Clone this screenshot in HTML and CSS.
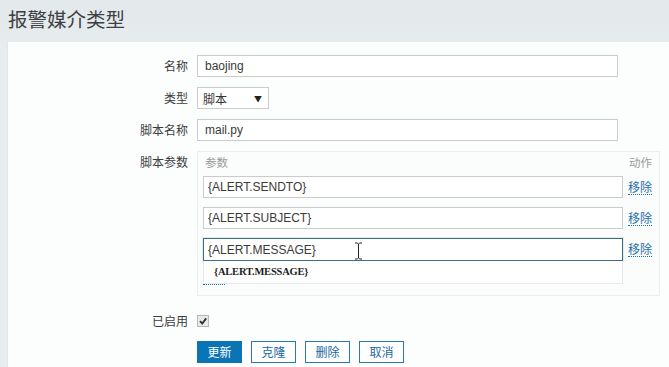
FILE: index.html
```html
<!DOCTYPE html>
<html lang="zh">
<head>
<meta charset="utf-8">
<title>报警媒介类型</title>
<link rel="stylesheet" href="styles.css">
</head>
<body>
<header class="page-header"><h1 class="page-title">报警媒介类型</h1></header>
<main class="card">
  <form class="form">
    <div class="row">
      <label class="label">名称</label>
      <div class="field"><input class="text wide" type="text" value="baojing"></div>
    </div>
    <div class="row">
      <label class="label">类型</label>
      <div class="field">
        <div class="select"><span>脚本</span><span class="caret">▼</span></div>
      </div>
    </div>
    <div class="row">
      <label class="label">脚本名称</label>
      <div class="field"><input class="text wide" type="text" value="mail.py"></div>
    </div>
    <div class="row">
      <label class="label">脚本参数</label>
      <div class="field">
        <div class="params">
          <div class="params-head">
            <span>参数</span><span>动作</span>
          </div>
          <div class="param-row">
            <input class="text param" type="text" value="{ALERT.SENDTO}">
            <a class="link">移除</a>
          </div>
          <div class="param-row">
            <input class="text param" type="text" value="{ALERT.SUBJECT}">
            <a class="link">移除</a>
          </div>
          <div class="param-row">
            <div class="input-wrap">
              <input class="text param focused" type="text" value="{ALERT.MESSAGE}">
              <div class="suggest">{ALERT.MESSAGE}</div>
              <svg class="ibeam" width="9" height="18" viewBox="0 0 9 18"><path d="M1 1h2.5M5.5 1H8M4.5 1.5v15M1 17h2.5M5.5 17H8M3.5 1.5L4.5 2.5L5.5 1.5M3.5 16.5L4.5 15.5L5.5 16.5" stroke="#222" stroke-width="1" fill="none"/></svg>
            </div>
            <a class="link">移除</a>
          </div>
          <div class="add-row"><span class="add-link"></span></div>
        </div>
      </div>
    </div>
    <div class="row enabled">
      <label class="label">已启用</label>
      <div class="field">
        <span class="checkbox"><svg width="10" height="10" viewBox="0 0 10 10"><path d="M2 5.2L4.2 7.5L8.2 2.3" stroke="#333" stroke-width="1.9" fill="none"/></svg></span>
      </div>
    </div>
    <div class="row buttons">
      <div class="label"></div>
      <div class="field btns">
        <button type="button" class="btn primary">更新</button>
        <button type="button" class="btn">克隆</button>
        <button type="button" class="btn">删除</button>
        <button type="button" class="btn">取消</button>
      </div>
    </div>
  </form>
</main>
</body>
</html>
```
FILE: styles.css
```css
* { box-sizing: border-box; }
html, body { margin: 0; padding: 0; }
body {
  background: #e7ecee;
  font-family: "Liberation Sans", "Noto Sans CJK SC", sans-serif;
  font-size: 12px;
  color: #2b2b2b;
  width: 669px;
  height: 367px;
  overflow: hidden;
}
.page-header {
  height: 42px;
  padding-left: 8px;
  background: linear-gradient(#e3e9eb, #e6ecee);
}
.page-title {
  margin: 0;
  font-size: 19.5px;
  font-weight: normal;
  line-height: 38px;
  color: #3d4043;
  font-family: "Noto Sans CJK SC", sans-serif;
}
.card {
  margin-left: 7px;
  background: #fcfdfd;
  height: 325px;
  padding-top: 13px;
  border-left: 1px solid #e2e6e8;
}
.form { display: flex; flex-direction: column; gap: 10px; }
.row { display: flex; gap: 9px; align-items: flex-start; }
.label {
  width: 180px;
  flex: none;
  text-align: right;
  line-height: 22px;
  font-size: 12px;
  color: #3a3c3e;
  font-family: "Noto Sans CJK SC", sans-serif;
}
.field { flex: none; }
.text {
  display: block;
  height: 22px;
  border: 1px solid #cbcbcb;
  background: #fff;
  padding: 0 7px;
  font-family: "Liberation Sans", "Noto Sans CJK SC", sans-serif;
  font-size: 12px;
  color: #3a3a3a;
  outline: none;
  margin: 0;
}
.wide { width: 421px; }
.select {
  width: 72px;
  height: 22px;
  border: 1px solid #cbcbcb;
  background: #fff;
  display: flex;
  align-items: center;
  justify-content: space-between;
  padding: 0 6px 0 5px;
  font-family: "Noto Sans CJK SC", sans-serif;
  color: #333;
}
.caret { font-size: 8px; color: #222; }
.params {
  width: 463px;
  height: 145px;
  border: 1px solid #eceff0;
  background: #fbfcfc;
  padding: 0 7px 0 5px;
}
.params-head {
  display: flex;
  justify-content: space-between;
  height: 24px;
  line-height: 20px;
  padding-left: 2px;
  color: #9a9a9a;
  font-family: "Noto Sans CJK SC", sans-serif;
  font-size: 11.5px;
}
.param-row {
  display: flex;
  align-items: center;
  gap: 5px;
  height: 22px;
  margin-bottom: 9px;
}
.param { width: 420px; padding: 0 4px; }
.input-wrap { position: relative; width: 420px; height: 22px; }
.focused { border-color: #3f6e7f; height: 23px; box-shadow: 0 0 0 1px rgba(140,190,205,0.25); }
.suggest {
  position: absolute;
  left: 0;
  top: 23px;
  width: 420px;
  height: 23px;
  background: #fff;
  border: 1px solid #e6e9ea;
  border-top: none;
  padding-left: 10px;
  line-height: 22px;
  font-family: "Liberation Serif", "DejaVu Serif", serif;
  font-weight: bold;
  font-size: 10.5px;
  letter-spacing: -0.2px;
  color: #1c1c1c;
  z-index: 2;
}
.ibeam { position: absolute; left: 151px; top: 4px; z-index: 3; }
.link {
  color: #1f6ea8;
  text-decoration: none;
  border-bottom: 1px dotted #1f6ea8;
  font-family: "Noto Sans CJK SC", sans-serif;
  font-size: 12px;
  line-height: 15px;
  cursor: pointer;
}
.add-row { height: 20px; padding-top: 15px; }
.add-link { display: block; width: 22px; border-bottom: 1px dotted #1f6ea8; }
.enabled { margin-top: 4px; }
.checkbox {
  display: flex;
  align-items: center;
  justify-content: center;
  width: 12px;
  height: 12px;
  margin-top: 5px;
  border: 1px solid #b8b8b8;
  background: #e9e9e9;
}
.buttons { margin-top: -1px; }
.btns { display: flex; gap: 9px; }
.btn {
  width: 45px;
  height: 22px;
  padding: 0;
  border: 1px solid #2b78ad;
  background: #fff;
  color: #2067a0;
  font-family: "Noto Sans CJK SC", sans-serif;
  font-size: 12px;
  line-height: 20px;
}
.btn.primary { background: #0b74b4; border-color: #0b74b4; color: #fff; }
```
